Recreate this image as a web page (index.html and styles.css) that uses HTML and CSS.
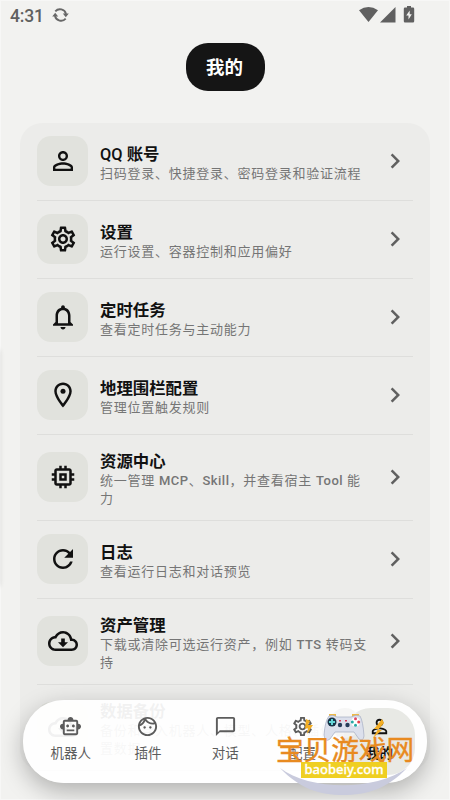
FILE: index.html
```html
<!DOCTYPE html>
<html lang="zh-CN">
<head>
<meta charset="utf-8">
<title>我的</title>
<link rel="stylesheet" href="styles.css">
</head>
<body>
<svg class="defs" width="0" height="0">
  <symbol id="chev" viewBox="0 0 24 24"><path d="M10 6L8.59 7.41 13.17 12l-4.58 4.59L10 18l6-6z"/></symbol>
  <symbol id="person" viewBox="0 0 24 24"><path d="M12 5.9a2.1 2.1 0 1 1 0 4.2 2.1 2.1 0 0 1 0-4.2m0 9c2.97 0 6.1 1.46 6.1 2.1v1.1H5.9V17c0-.64 3.13-2.1 6.1-2.1M12 4C9.79 4 8 5.79 8 8s1.790 4 4 4 4-1.790 4-4-1.790-4-4-4zm0 9c-2.670 0-8 1.340-8 4v3h16v-3c0-2.660-5.330-4-8-4z"/></symbol>
  <symbol id="gear" viewBox="0 0 24 24"><path d="M19.43 12.98c.04-.32.07-.64.07-.98 0-.34-.03-.66-.07-.98l2.110-1.650c.19-.15.24-.42.12-.64l-2-3.460c-.09-.16-.26-.25-.44-.25-.06 0-.12.01-.17.03l-2.490 1c-.52-.4-1.080-.73-1.690-.98l-.38-2.650C14.460 2.180 14.250 2 14 2h-4c-.25 0-.46.18-.49.42l-.38 2.650c-.61.25-1.170.59-1.690.98l-2.490-1c-.06-.02-.12-.03-.18-.03-.17 0-.34.09-.43.25l-2 3.460c-.13.22-.07.49.12.64l2.110 1.650c-.04.32-.07.65-.07.98 0 .33.03.66.07.98l-2.110 1.650c-.19.15-.24.42-.12.64l2 3.460c.09.16.26.25.44.25.06 0 .12-.01.17-.03l2.490-1c.52.4 1.080.73 1.690.98l.38 2.650c.03.24.24.42.49.42h4c.25 0 .46-.18.49-.42l.38-2.650c.61-.25 1.170-.59 1.690-.98l2.490 1c.06.02.12.03.18.03.17 0 .34-.09.43-.25l2-3.460c.12-.22.07-.49-.12-.64l-2.110-1.650zm-1.980-1.710c.04.31.05.52.05.73 0 .21-.02.43-.05.73l-.14 1.130.89.7 1.080.84-.7 1.210-1.270-.51-1.040-.42-.9.68c-.43.32-.84.56-1.250.73l-1.060.43-.16 1.130-.2 1.350h-1.400l-.19-1.350-.16-1.130-1.060-.43c-.43-.18-.83-.41-1.230-.71l-.91-.7-1.060.43-1.270.51-.7-1.210 1.080-.84.89-.7-.14-1.130c-.03-.31-.05-.54-.05-.74s.02-.43.05-.73l.14-1.130-.89-.7-1.080-.84.7-1.210 1.270.51 1.040.42.9-.68c.43-.32.84-.56 1.250-.73l1.060-.43.16-1.130.2-1.350h1.390l.19 1.350.16 1.130 1.060.43c.43.18.83.41 1.230.71l.91.7 1.060-.43 1.270-.51.7 1.210-1.070.85-.89.7.14 1.130zM12 8c-2.210 0-4 1.790-4 4s1.790 4 4 4 4-1.790 4-4-1.790-4-4-4zm0 6c-1.100 0-2-.9-2-2s.9-2 2-2 2 .9 2 2-.9 2-2 2z"/></symbol>
  <symbol id="bell" viewBox="0 0 24 24"><path d="M12 22c1.100 0 2-.9 2-2h-4c0 1.100.9 2 2 2zm6-6v-5c0-3.070-1.630-5.640-4.500-6.320V4c0-.83-.67-1.500-1.500-1.500s-1.500.67-1.500 1.500v.68C7.640 5.360 6 7.920 6 11v5l-2 2v1h16v-1l-2-2zm-2 1H8v-6c0-2.480 1.510-4.500 4-4.500s4 2.020 4 4.500v6z"/></symbol>
  <symbol id="pin" viewBox="0 0 24 24"><path d="M12 2C8.130 2 5 5.130 5 9c0 5.250 7 13 7 13s7-7.750 7-13c0-3.870-3.130-7-7-7zM7 9c0-2.760 2.240-5 5-5s5 2.240 5 5c0 2.880-2.880 7.190-5 9.880C9.920 16.210 7 11.850 7 9z"/><circle cx="12" cy="9" r="2"/></symbol>
  <symbol id="chip" viewBox="0 0 24 24"><path d="M15 9H9v6h6V9zm-2 4h-2v-2h2v2zm8-2V9h-2V7c0-1.100-.9-2-2-2h-2V3h-2v2h-2V3H9v2H7c-1.100 0-2 .9-2 2v2H3v2h2v2H3v2h2v2c0 1.100.9 2 2 2h2v2h2v-2h2v2h2v-2h2c1.100 0 2-.9 2-2v-2h2v-2h-2v-2h2zm-4 6H7V7h10v10z"/></symbol>
  <symbol id="refresh" viewBox="0 0 24 24"><path d="M17.650 6.350C16.200 4.900 14.210 4 12 4c-4.420 0-7.990 3.580-7.990 8s3.570 8 7.990 8c3.730 0 6.840-2.550 7.730-6h-2.080c-.82 2.330-3.040 4-5.650 4-3.310 0-6-2.690-6-6s2.690-6 6-6c1.660 0 3.140.69 4.220 1.780L13 11h7V4l-2.350 2.350z"/></symbol>
  <symbol id="cloud" viewBox="0 0 24 24"><path d="M19.350 10.040C18.670 6.590 15.640 4 12 4 9.110 4 6.610 5.640 5.360 8.040 2.350 8.360 0 10.900 0 14c0 3.310 2.690 6 6 6h13c2.760 0 5-2.240 5-5 0-2.640-2.050-4.780-4.650-4.960zM19 18H6c-2.210 0-4-1.790-4-4 0-2.050 1.530-3.760 3.560-3.970l1.070-.11.5-.95C8.080 7.140 9.940 6 12 6c2.620 0 4.880 1.860 5.390 4.430l.3 1.500 1.530.11c1.560.1 2.780 1.410 2.780 2.960 0 1.650-1.350 3-3 3zm-5.550-8h-2.900v3H8l4 4 4-4h-2.550z"/></symbol>
  <symbol id="bot" viewBox="0 0 24 24"><path d="M20 9V7c0-1.100-.9-2-2-2h-3c0-1.660-1.340-3-3-3S9 3.340 9 5H6c-1.100 0-2 .9-2 2v2c-1.660 0-3 1.340-3 3s1.340 3 3 3v4c0 1.100.9 2 2 2h12c1.100 0 2-.9 2-2v-4c1.660 0 3-1.340 3-3s-1.340-3-3-3zm-2 10H6V7h12v12zm-9-6c-.83 0-1.500-.67-1.500-1.500S8.170 10 9 10s1.500.67 1.500 1.500S9.830 13 9 13zm7.500-1.500c0 .83-.67 1.500-1.500 1.500s-1.500-.67-1.500-1.500.67-1.500 1.500-1.500 1.500.67 1.500 1.500zM8 15h8v2H8v-2z"/></symbol>
  <symbol id="face" viewBox="0 0 24 24"><path d="M10.250 13c0 .69-.56 1.250-1.250 1.250S7.750 13.690 7.750 13s.56-1.250 1.250-1.250 1.250.56 1.250 1.250zM15 11.750c-.69 0-1.250.56-1.250 1.250s.56 1.250 1.250 1.250 1.250-.56 1.250-1.250-.56-1.250-1.250-1.250zm7 .25c0 5.520-4.480 10-10 10S2 17.520 2 12 6.480 2 12 2s10 4.480 10 10zM10.660 4.120C12.060 6.440 14.600 8 17.500 8c.46 0 .91-.05 1.340-.12C17.440 5.560 14.900 4 12 4c-.46 0-.91.05-1.340.12zM4.420 9.470c1.710-.97 3.030-2.550 3.660-4.440C6.370 6 5.050 7.580 4.420 9.470zM20 12c0-.78-.12-1.530-.33-2.240-.7.15-1.420.24-2.170.24-3.130 0-5.920-1.440-7.760-3.690C8.690 8.870 6.600 10.880 4 11.860c.01.04 0 .09 0 .14 0 4.410 3.590 8 8 8s8-3.590 8-8z"/></symbol>
  <symbol id="chat" viewBox="0 0 24 24"><path d="M20 2H4c-1.100 0-2 .9-2 2v18l4-4h14c1.100 0 2-.9 2-2V4c0-1.100-.9-2-2-2zm0 14H6l-2 2V4h16v12z"/></symbol>
</svg>

<div class="screen">
  <header class="status">
    <span class="clock">4:31</span>
    <svg class="sync" viewBox="0 0 17 16"><path d="M3.300 4.400A6.200 6.200 0 0 1 14 7M13.700 11.600A6.200 6.200 0 0 1 3 9" fill="none" stroke="#686868" stroke-width="1.900"/><path d="M10.800 6.500h6l-3 3.700zM.2 9.500h6l-3-3.700z" fill="#686868"/></svg>
    <svg class="signals" viewBox="0 0 58 18"><path d="M0 4.200Q9.500-2.200 19 4.200L9.500 16z"/><path d="M21 16.500L36.500 1v15.500z"/><path d="M48 0h4v1.500h2q1.200 0 1.200 1.200v12.600q0 1.200-1.200 1.200h-8q-1.200 0-1.200-1.200V2.700q0-1.200 1.200-1.200h2z"/><path d="M50.700 4.500l-3.500 5h2.300v4l3.300-5.200h-2.100z" fill="#f2f2f0"/></svg>
  </header>
  <h1 class="pill">我的</h1>

  <main class="card">
    <div class="row"><span class="tile"><svg><use href="#person"/></svg></span><div class="text"><h2><span class="latin">QQ</span> 账号</h2><p>扫码登录、快捷登录、密码登录和验证流程</p></div><svg class="chev"><use href="#chev"/></svg></div>
    <div class="row"><span class="tile"><svg><use href="#gear"/></svg></span><div class="text"><h2>设置</h2><p>运行设置、容器控制和应用偏好</p></div><svg class="chev"><use href="#chev"/></svg></div>
    <div class="row"><span class="tile"><svg><use href="#bell"/></svg></span><div class="text"><h2>定时任务</h2><p>查看定时任务与主动能力</p></div><svg class="chev"><use href="#chev"/></svg></div>
    <div class="row"><span class="tile"><svg><use href="#pin"/></svg></span><div class="text"><h2>地理围栏配置</h2><p>管理位置触发规则</p></div><svg class="chev"><use href="#chev"/></svg></div>
    <div class="row tall"><span class="tile"><svg><use href="#chip"/></svg></span><div class="text"><h2>资源中心</h2><p>统一管理 <b>MCP</b>、<b>Skill</b>，并查看宿主 <b>Tool</b> 能<br>力</p></div><svg class="chev"><use href="#chev"/></svg></div>
    <div class="row"><span class="tile"><svg><use href="#refresh"/></svg></span><div class="text"><h2>日志</h2><p>查看运行日志和对话预览</p></div><svg class="chev"><use href="#chev"/></svg></div>
    <div class="row tall"><span class="tile"><svg><use href="#cloud"/></svg></span><div class="text"><h2>资产管理</h2><p>下载或清除可选运行资产，例如 <b>TTS</b> 转码支<br>持</p></div><svg class="chev"><use href="#chev"/></svg></div>
    <div class="row tall"><span class="tile"><svg><use href="#cloud"/></svg></span><div class="text"><h2>数据备份</h2><p>备份和导入机器人、模型、人格、插件和配<br>置数据</p></div><svg class="chev"><use href="#chev"/></svg></div>
  </main>

  <nav class="nav">
    <a class="item"><svg><use href="#bot"/></svg>机器人</a>
    <a class="item"><svg><use href="#face"/></svg>插件</a>
    <a class="item"><svg><use href="#chat"/></svg>对话</a>
    <a class="item"><svg><use href="#gear"/></svg>配置</a>
    <a class="item active"><svg><use href="#person"/></svg>我的</a>
  </nav>

  <div class="edge"></div>

  <div class="mark">
    <svg class="art" viewBox="0 0 142 92">
      <circle cx="70" cy="19" r="15" fill="#f4f4f2" opacity=".8"/>
      <path d="M5 64C35 87 100 87 132 64C112 85 92 91 68 91C45 91 25 85 5 64z" fill="#c9cbdd"/>
      <path d="M31 15l4 2-2 4 5 0-6 9 1-6-3 1zM107 15l-8 10 4 0-5 9 9-8-4 0 6-7z" fill="#f3ae24"/>
      <path d="M54 10h7v3h-7zM77 10h7v3h-7z" fill="#efb944"/>
      <path d="M54 12Q58 10 62 13H76Q81 10 85 12Q88 17 89 32Q88 38 84 35L79 28H60L55 35Q50 39 49 31Q50 17 54 12z" fill="#dce0ec" stroke="#a5acc1" stroke-width=".7"/>
      <circle cx="57" cy="18" r="4.500" fill="#173448"/><path d="M56 15h2v2h2v2h-2v2h-2v-2h-2v-2h2z" fill="#64d5d7"/>
      <circle cx="80.500" cy="18" r="4.500" fill="#fff"/>
      <circle cx="80.500" cy="14.800" r="1.500" fill="#df4764"/><circle cx="80.500" cy="21.200" r="1.500" fill="#28aaa5"/><circle cx="77.300" cy="18" r="1.500" fill="#28aaa5"/><circle cx="83.700" cy="18" r="1.500" fill="#e73d4a"/>
      <circle cx="65" cy="21" r="2.200" fill="#263d5a"/><circle cx="72.500" cy="21" r="2.200" fill="#263d5a"/><path d="M64 16h2v1.500h-2zM70 16h2v1.500h-2z" fill="#d43855"/>
    </svg>
    <div class="markname">宝贝游戏网</div>
    <div class="marksite">baobeiy.com</div>
  </div>
</div>
</body>
</html>
```
FILE: styles.css
```css
* { box-sizing: border-box; margin: 0; padding: 0; }
body { background: #f2f2f0; font-family: Roboto, "Noto Sans CJK SC", sans-serif; }
.defs { display: block; }
.screen { position: relative; width: 450px; height: 800px; overflow: hidden; background: #f2f2f0; box-shadow: inset 0 0 0 1px #f7f7f6; }
svg { fill: currentColor; flex: none; }

.status { height: 43px; padding: 6px 33px 0 10px; display: flex; align-items: flex-start; color: #606060; }
.clock { font-size: 17.500px; line-height: 20px; font-weight: 500; letter-spacing: -0.2px; }
.sync { width: 17px; height: 16px; margin: 1px 0 0 8px; }
.signals { width: 58px; height: 18px; margin-left: auto; margin-top: 0; }

.pill { width: 79px; height: 48px; margin: 0 auto; padding-right: 1px; border-radius: 22px; background: #151515; color: #fff; font-size: 18.500px; line-height: 51px; font-weight: 700; text-align: center; }

.card { width: 410px; margin: 32px auto 0; padding: 0 17px; background: #ececea; border-radius: 22px; }
.row { height: 78px; padding-bottom: 2px; display: flex; align-items: center; border-bottom: 1px solid #dededc; }
.row.tall { height: 86px; }
.tile { width: 51px; height: 50px; border-radius: 14px; background: #e1e2dd; display: flex; align-items: center; justify-content: center; color: #111; }
.tile svg, .chev { width: 30px; height: 30px; }
.text { flex: 1; min-width: 0; margin-left: 12px; padding-top: 5px; white-space: nowrap; }
h2 { font-size: 16.400px; line-height: 22px; font-weight: 700; color: #111; }
.latin { font-weight: 500; }
p { margin-top: -1px; font-size: 13px; line-height: 18px; letter-spacing: 0.750px; color: #757575; }
p b { font-weight: 500; letter-spacing: 0.500px; }
.chev { margin-right: 3px; color: #606060; }

.nav { position: absolute; left: 23px; top: 700px; width: 404px; height: 83px; padding: 8px 12px 8px 9px; border-radius: 41px; background: rgba(255, 255, 255, 0.94); box-shadow: 0 8px 24px rgba(0, 0, 0, 0.280); display: flex; }
.item { flex: 0 0 77.300px; display: flex; flex-direction: column; align-items: center; padding-top: 7px; font-size: 13.500px; line-height: 20px; color: #5c5c5c; border-radius: 27px; }
.item svg { width: 23px; height: 23px; margin-bottom: 5px; }
.item.active { background: #e8e9e5; color: #111; font-weight: 700; flex: 0 0 71px; margin-left: auto; }

.edge { position: absolute; left: -4px; top: 350px; width: 4px; height: 236px; box-shadow: 0 0 5px rgba(0, 0, 0, 0.120); }

.mark { position: absolute; left: 275px; top: 704px; width: 142px; height: 92px; }
.art { position: absolute; left: 0; top: 0; width: 142px; height: 92px; }
.markname { position: absolute; left: 1px; top: 27px; font-family: "Noto Sans CJK SC", sans-serif; font-size: 27.600px; line-height: 34px; white-space: nowrap; color: #e88a20; -webkit-text-stroke: 0.400px #e88a20; }
.marksite { position: absolute; left: 26px; top: 58px; width: 86px; height: 16px; background: #efcf22; color: #fff; font-family: "Noto Sans", sans-serif; font-size: 13px; line-height: 14px; font-weight: 500; text-align: center; -webkit-text-stroke: 0.300px #fff; }
```
